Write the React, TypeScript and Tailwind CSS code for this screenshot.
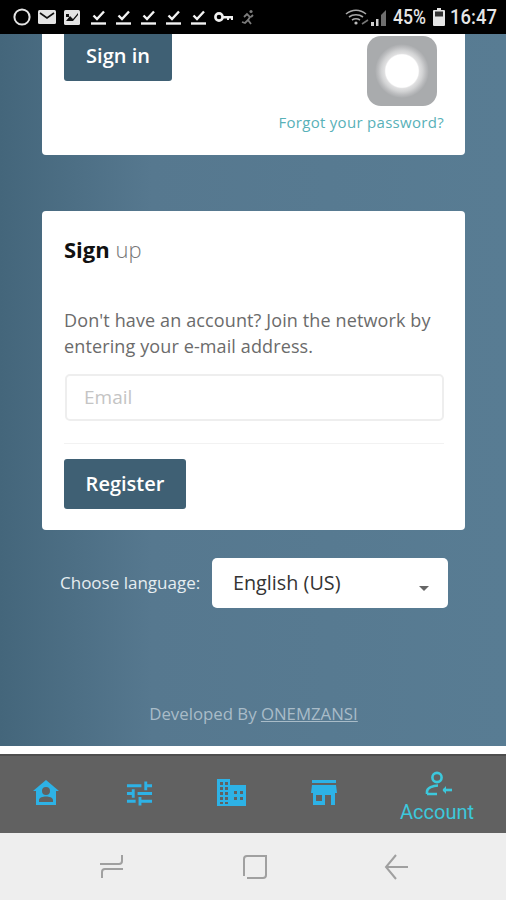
import React from "react";

const Check = () => (
  <svg width="18" height="16" viewBox="0 0 18 16" fill="none" stroke="#f2f2f2" strokeWidth="2.4">
    <path d="M3.5 6.5 L7 10 L14 2.5" />
    <path d="M1 14.5 H16" />
  </svg>
);

function StatusBar() {
  return (
    <div className="h-[34px] bg-black flex items-center shrink-0 pl-[13px] pr-[9px] text-[#e8e8e8]">
      <svg width="18" height="18" viewBox="0 0 18 18" fill="none" stroke="#e4e4e4" strokeWidth="2" className="shrink-0">
        <circle cx="9" cy="9" r="7.6" />
      </svg>
      <svg width="18" height="14" viewBox="0 0 18 14" className="ml-[7px] shrink-0">
        <rect width="18" height="14" rx="1.5" fill="#e4e4e4" />
        <path d="M2 3 L9 8 L16 3" fill="none" stroke="#111" strokeWidth="1.6" />
      </svg>
      <svg width="16" height="15" viewBox="0 0 16 15" className="ml-[8px] shrink-0">
        <rect width="16" height="15" rx="1.5" fill="#e4e4e4" />
        <path d="M2 11 L6 6 L9 9 L14 3 V5 L9 11 Z" fill="#111" />
        <path d="M2 4 H5 V7 H2 Z" fill="#111" />
      </svg>
      <div className="flex ml-[10px] gap-[7px] shrink-0">
        <Check />
        <Check />
        <Check />
        <Check />
        <Check />
      </div>
      <svg width="20" height="12" viewBox="0 0 20 12" className="ml-[6px] shrink-0">
        <circle cx="5" cy="6" r="3.6" fill="none" stroke="#f0f0f0" strokeWidth="2.6" />
        <path d="M8 5 H19 V9 H17 V7.5 H15 V9 H13 V7.5 H8 Z" fill="#f0f0f0" />
      </svg>
      <svg width="15" height="16" viewBox="0 0 15 16" className="ml-[7px] shrink-0" fill="none" stroke="#7c7c7c" strokeWidth="1.8">
        <circle cx="10" cy="2.5" r="1.6" fill="#7c7c7c" stroke="none" />
        <path d="M3 8 L6 5 L9 8 L7 11 L10 15 M7 11 L4 14 L1 13 M12 6 L10 8" />
      </svg>
      <div className="ml-auto flex items-center shrink-0">
        <svg width="24" height="17" viewBox="0 0 24 17" fill="none" stroke="#a8a8a8" strokeWidth="1.6" className="-ml-[1px]">
          <path d="M1 5 C7 0 15 0 21 5" />
          <path d="M4 8 C8 5 14 5 18 8" />
          <path d="M7 11 C9.5 9.5 12.5 9.5 15 11" />
          <circle cx="11" cy="14" r="1.6" fill="#bdbdbd" stroke="none" />
          <path d="M17 15 L23 11" stroke="#777" />
        </svg>
        <svg width="17" height="17" viewBox="0 0 17 17" className="ml-[1px]">
          <path d="M1 13 H4 V17 H1 Z" fill="#cfcfcf" />
          <path d="M6 10 H8.5 V17 H6 Z" fill="#cfcfcf" />
          <path d="M11 6 L16 1 V17 H11 Z" fill="#6e6e6e" />
        </svg>
        <span className="ml-[6px] text-[20px] leading-none font-medium scale-x-[0.88] origin-left w-[37px] font-['Roboto',sans-serif] text-[#e6e6e6]">
          45%
        </span>
        <svg width="12" height="18" viewBox="0 0 12 18" className="ml-[3px]">
          <path d="M4 0 H8 V2 H11 A1 1 0 0 1 12 3 V17 A1 1 0 0 1 11 18 H1 A1 1 0 0 1 0 17 V3 A1 1 0 0 1 1 2 H4 Z" fill="#e6e6e6" />
          <rect x="2" y="3.5" width="8" height="5" fill="#333" />
        </svg>
        <span className="ml-[5px] text-[21px] leading-none font-medium scale-x-[0.88] origin-left w-[47px] font-['Roboto',sans-serif] text-[#e6e6e6]">
          16:47
        </span>
      </div>
    </div>
  );
}

function Avatar() {
  return (
    <div className="w-[70px] h-[70px] rounded-[14px] bg-[#a9abad] flex items-center justify-center">
      <div className="w-[54px] h-[54px] rounded-full bg-[radial-gradient(closest-side,#ffffff_0%,#ffffff_60%,#e0e0e1_65%,#d2d3d4_76%,#bcbdbf_88%,#a9abad_100%)]" />
    </div>
  );
}

function NavBar() {
  return (
    <div className="h-[79px] shrink-0 bg-[#616161] border-t-2 border-[#4e4e4e] flex items-start text-[#2db2e6]">
      <div className="w-[92px] flex justify-center pt-[24px]">
        <svg width="28" height="26" viewBox="0 0 28 26" fill="#2db2e6">
          <path fillRule="evenodd" d="M14 0 L27 11 H24 V25 H4 V11 H1 Z M14 7 A4 4 0 1 0 14 15 A4 4 0 1 0 14 7 Z M7 22 H21 V20 C21 17.5 17 16.5 14 16.5 C11 16.5 7 17.5 7 20 Z" />
        </svg>
      </div>
      <div className="w-[94px] flex justify-center pt-[24px]">
        <svg width="27" height="27" viewBox="0 0 28 27" fill="#2db2e6">
          <path d="M1 4 H16 V7 H1 Z M19 1 H22 V4 H27 V7 H22 V10 H19 Z" />
          <path d="M1 12 H6 V9 H9 V18 H6 V15 H1 Z M12 12 H27 V15 H12 Z" />
          <path d="M1 20 H10 V23 H1 Z M13 20 V17 H16 V20 H27 V23 H16 V26 H13 V23 Z" />
        </svg>
      </div>
      <div className="w-[90px] flex justify-center pt-[23px]">
        <svg width="29" height="27" viewBox="0 0 29 27" fill="#2db2e6">
          <path fillRule="evenodd" d="M0 0 H13 V6 H29 V27 H0 Z M3 3 V6 H6 V3 Z M8 3 V6 H11 V3 Z M3 8 V11 H6 V8 Z M8 8 V11 H11 V8 Z M3 13 V16 H6 V13 Z M8 13 V16 H11 V13 Z M3 18 V21 H6 V18 Z M8 18 V21 H11 V18 Z M3 23 V25 H6 V23 Z M8 23 V25 H11 V23 Z M17 12 V15 H20 V12 Z M23 12 V15 H26 V12 Z M17 18 V21 H20 V18 Z M23 18 V21 H26 V18 Z" />
        </svg>
      </div>
      <div className="w-[96px] flex justify-center pt-[24px]">
        <svg width="26" height="25" viewBox="0 0 26 25" fill="#2db2e6">
          <path d="M1 0 H25 V3 H1 Z" />
          <path fillRule="evenodd" d="M1 5 H25 L26 13 H24 V25 H20 V15 H14 V25 H2 V13 H0 Z M5 15 V21 H11 V15 Z" />
        </svg>
      </div>
      <div className="flex-1 flex flex-col items-center text-[#3cc8dc] pt-[15px]">
        <svg width="28" height="26" viewBox="0 0 28 26" fill="none" stroke="#3cc8dc" strokeWidth="2.6">
          <circle cx="12" cy="6.5" r="4.6" />
          <path d="M2 23 V20.5 C2 17 8 14.5 13 14.5 M2 23 H12" />
          <path d="M27 19 H18" />
          <path d="M21 15 L17.5 19 L21 23 Z" fill="#3cc8dc" stroke="none" />
        </svg>
        <span className="text-[20px] leading-none mt-[5px] mr-[4px] font-['Roboto',sans-serif]">Account</span>
      </div>
    </div>
  );
}

function SoftKeys() {
  return (
    <div className="flex-1 bg-[#eeeeee] flex items-center pl-[99px] pr-[98px] justify-between pt-[1px]">
      <svg width="26" height="26" viewBox="0 0 26 26" fill="none" stroke="#a0a0a0" strokeWidth="2">
        <path d="M1 10 H20 A3 3 0 0 0 23 7 V1" />
        <path d="M24 15 H6 A3 3 0 0 0 3 18 V24" />
      </svg>
      <svg width="24" height="24" viewBox="0 0 24 24" fill="none" stroke="#a0a0a0" strokeWidth="2">
        <path d="M1 21 V4 A3 3 0 0 1 4 1 H23 V20 A3 3 0 0 1 20 23 H4" />
      </svg>
      <svg width="24" height="26" viewBox="0 0 24 26" fill="none" stroke="#a0a0a0" strokeWidth="2">
        <path d="M12 1 L2 13 L12 25 M2 13 H24" />
      </svg>
    </div>
  );
}

export default function App() {
  return (
    <div className="w-[506px] h-[900px] flex flex-col overflow-hidden bg-white font-['Open_Sans',sans-serif]">
      <StatusBar />
      <div className="h-[712px] shrink-0 bg-gradient-to-r from-[#44667b] via-[#56788f] via-[30%] to-[#587c93]">
        <div className="ml-[42px] w-[423px] h-[121px] bg-white rounded-b-[4px] pl-[22px] pr-[21px] flex justify-between">
          <button className="w-[108px] h-[47px] pb-[3px] bg-[#3f6074] rounded-b-[3px] text-white text-[20px] font-semibold">
            Sign in
          </button>
          <div className="flex flex-col items-end pt-[2px]">
            <div className="mr-[7px]">
              <Avatar />
            </div>
            <a className="text-[15px] leading-[20px] mt-[6px] text-[#58b1b8] tracking-[0.3px]">Forgot your password?</a>
          </div>
        </div>
        <div className="ml-[42px] w-[423px] mt-[56px] h-[319px] bg-white rounded-[4px] pl-[22px] pr-[21px] pt-[23px]">
          <h2 className="text-[22px] leading-[30px] text-[#111]">
            <span className="font-bold">Sign</span> <span className="font-light text-[#777]">up</span>
          </h2>
          <p className="mt-[43px] text-[18px] leading-[26px] tracking-[0.12px] text-[#6b6b6b]">
            Don't have an account? Join the network by entering your e-mail address.
          </p>
          <div className="mt-[15px] h-[47px] ml-[1px] border-2 border-[#eeeeee] rounded-[5px] flex items-center pl-[17px] text-[19px] text-[#c4c4c4]">
            Email
          </div>
          <div className="mt-[22px] h-px bg-[#f2f2f2]" />
          <button className="mt-[15px] w-[122px] h-[50px] block bg-[#3f6074] rounded-[3px] text-white text-[20px] font-semibold">
            Register
          </button>
        </div>
        <div className="mt-[28px] ml-[60px] flex items-center">
          <span className="text-[17px] text-[#e6edf1] font-medium w-[152px]">Choose language:</span>
          <div className="w-[236px] h-[50px] bg-white rounded-[5px] flex items-center pl-[21px] pr-[19px] justify-between text-[19.8px] text-[#333]">
            <span>English (US)</span>
            <span className="w-0 h-0 mt-[10px] border-x-[5px] border-t-[5px] border-x-transparent border-t-[#666]" />
          </div>
        </div>
        <div className="mt-[95px] text-center text-[16.8px] leading-[22px] text-[#a9bcc8] pl-[1px]">
          Developed By <span className="underline">ONEMZANSI</span>
        </div>
      </div>
      <div className="h-[8px] shrink-0 bg-white" />
      <NavBar />
      <SoftKeys />
    </div>
  );
}
